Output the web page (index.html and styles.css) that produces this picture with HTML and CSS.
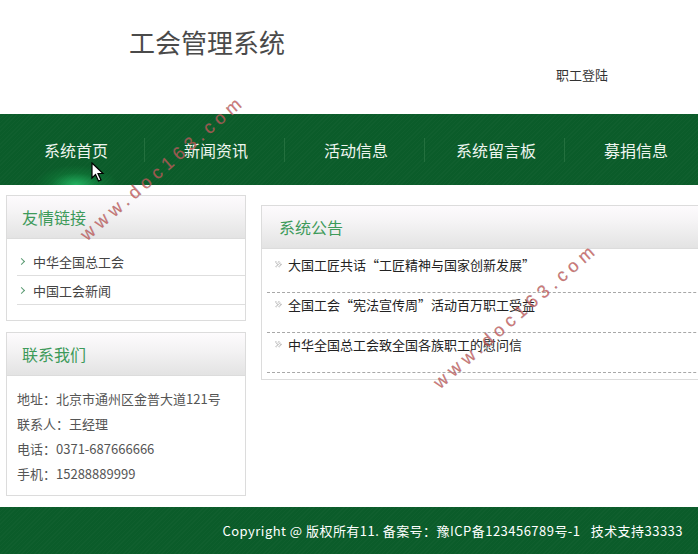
FILE: index.html
```html
<!DOCTYPE html>
<html lang="zh-CN">
<head>
<meta charset="utf-8">
<title>工会管理系统</title>
<link rel="stylesheet" href="styles.css">
</head>
<body>
<div class="page">
  <header class="top">
    <h1 class="logo">工会管理系统</h1>
    <a class="login" href="#">职工登陆</a>
  </header>
  <nav class="nav">
    <a class="nav-item active" href="#">系统首页</a>
    <a class="nav-item" href="#">新闻资讯</a>
    <a class="nav-item" href="#">活动信息</a>
    <a class="nav-item" href="#">系统留言板</a>
    <a class="nav-item last" href="#">募捐信息</a>
  </nav>
  <main class="main">
    <aside class="side">
      <section class="box links">
        <h2 class="box-title">友情链接</h2>
        <ul class="link-list">
          <li><span class="chev"></span>中华全国总工会</li>
          <li><span class="chev"></span>中国工会新闻</li>
        </ul>
      </section>
      <section class="box contact">
        <h2 class="box-title">联系我们</h2>
        <div class="contact-body">
          <p>地址：北京市通州区金普大道121号</p>
          <p>联系人：王经理</p>
          <p>电话：0371-687666666</p>
          <p>手机：15288889999</p>
        </div>
      </section>
    </aside>
    <section class="box notice">
      <h2 class="box-title">系统公告</h2>
      <ul class="notice-list">
        <li><svg class="dbl" width="7" height="7" viewBox="0 0 7 7"><path d="M0.5 0.5 L3 3.5 L0.5 6.5 M3.5 0.5 L6 3.5 L3.5 6.5" fill="none" stroke="#b0b0b0" stroke-width="1.3" stroke-dasharray="1 0.6"/></svg>大国工匠共话“工匠精神与国家创新发展”</li>
        <li><svg class="dbl" width="7" height="7" viewBox="0 0 7 7"><path d="M0.5 0.5 L3 3.5 L0.5 6.5 M3.5 0.5 L6 3.5 L3.5 6.5" fill="none" stroke="#b0b0b0" stroke-width="1.3" stroke-dasharray="1 0.6"/></svg>全国工会“宪法宣传周”活动百万职工受益</li>
        <li><svg class="dbl" width="7" height="7" viewBox="0 0 7 7"><path d="M0.5 0.5 L3 3.5 L0.5 6.5 M3.5 0.5 L6 3.5 L3.5 6.5" fill="none" stroke="#b0b0b0" stroke-width="1.3" stroke-dasharray="1 0.6"/></svg>中华全国总工会致全国各族职工的慰问信</li>
      </ul>
    </section>
  </main>
  <footer class="footer">Copyright @ 版权所有11. 备案号：豫ICP备123456789号-1&nbsp;&nbsp;&nbsp;技术支持33333</footer>
</div>
<span class="wm wm1">www.doc163.com</span>
<span class="wm wm2">www.doc163.com</span>
<svg class="cursor" width="14" height="20" viewBox="0 0 14 20"><path d="M1 1 L1 16 L4.5 12.5 L7.5 19 L10 18 L7 11.5 L12 11.5 Z" fill="#fff" stroke="#000" stroke-width="1.2" stroke-linejoin="miter"/></svg>
</body>
</html>
```

FILE: styles.css
```css
html, body {
  margin: 0;
  padding: 0;
  background: #fff;
  overflow: hidden;
}
body {
  font-family: "Noto Sans CJK SC", "Microsoft YaHei", sans-serif;
  color: #333;
  width: 698px;
  height: 554px;
  position: relative;
}
.page {
  width: 698px;
}
.top {
  height: 114px;
  display: flex;
  justify-content: space-between;
  align-items: flex-start;
}
.logo {
  margin: 25px 0 0 129px;
  font-size: 26px;
  font-weight: normal;
  color: #4a4a4a;
  line-height: 34px;
}
.login {
  margin: 66px 90px 0 0;
  font-size: 13px;
  color: #333;
  text-decoration: none;
  line-height: 18px;
}
.nav {
  height: 71px;
  background-color: #0b5c2a;
  background-image:
    radial-gradient(ellipse 42px 20px at 76px 71px, rgba(40, 200, 110, 0.8), rgba(20, 150, 70, 0.3) 60%, rgba(11, 92, 42, 0) 100%),
    repeating-linear-gradient(135deg, rgba(255,255,255,0.018) 0 1px, rgba(0,0,0,0) 1px 3px);
  display: flex;
  align-items: center;
  padding-left: 5px;
}
.nav-item {
  flex: none;
  width: 139px;
  border-right: 1px solid #23703e;
  height: 24px;
  line-height: 24px;
  text-align: center;
  text-indent: 3px;
  color: #eef5ef;
  font-size: 16px;
  text-decoration: none;
}
.nav-item.last {
  border-right: none;
}
.main {
  display: flex;
  align-items: flex-start;
  height: 322px;
}
.side {
  margin: 10px 0 0 6px;
  width: 240px;
  flex: none;
  display: flex;
  flex-direction: column;
  gap: 11px;
}
.box {
  border: 1px solid #dcdcdc;
  background: #fff;
}
.box-title {
  margin: 0;
  height: 42px;
  line-height: 42px;
  font-size: 16px;
  font-weight: normal;
  color: #3d9a5a;
  padding-left: 15px;
  background: linear-gradient(#fdfbfd 0%, #f4f3f4 40%, #e3e3e3 100%);
  border-bottom: 1px solid #dcdcdc;
}
.link-list {
  list-style: none;
  margin: 0;
  padding: 8px 0 15px 10px;
  font-size: 13px;
  color: #444;
}
.link-list li {
  height: 28px;
  line-height: 29px;
  border-bottom: 1px solid #dedede;
  display: flex;
  align-items: center;
  padding-left: 2px;
}
.chev {
  width: 4px;
  height: 4px;
  border-top: 1.5px solid #5a9a72;
  border-right: 1.5px solid #5a9a72;
  transform: rotate(45deg);
  margin: 0 9px 0 0;
}
.contact-body {
  padding: 10px 10px 9px 10px;
  font-size: 13px;
  color: #555;
}
.contact-body p {
  margin: 0;
  line-height: 25px;
}
.notice {
  margin: 20px 0 0 15px;
  width: 700px;
  flex: none;
}
.notice .box-title {
  padding-left: 17px;
}
.notice-list {
  list-style: none;
  margin: 0;
  padding: 4px 0 6px 5px;
  font-size: 13px;
  color: #222;
}
.notice-list li {
  height: 39px;
  line-height: 24px;
  border-bottom: 1px dashed #a8a8a8;
  padding-left: 8px;
  display: flex;
  align-items: flex-start;
}
.dbl {
  flex: none;
  margin: 8px 6px 0 0;
}
.footer {
  height: 47px;
  line-height: 47px;
  background-color: #0b5c2a;
  background-image: repeating-linear-gradient(135deg, rgba(255,255,255,0.018) 0 1px, rgba(0,0,0,0) 1px 3px);
  color: #fff;
  font-size: 13px;
  letter-spacing: 0.47px;
  text-align: right;
  padding-right: 15px;
}
.wm {
  position: absolute;
  font-family: "Liberation Sans", Arial, sans-serif;
  font-size: 18px;
  letter-spacing: 5px;
  color: rgba(205, 80, 80, 0.8);
  white-space: nowrap;
  transform: translate(-50%, -50%) rotate(-41deg);
  pointer-events: none;
  -webkit-text-stroke: 0.4px rgba(120, 120, 120, 0.5);
}
.wm1 {
  left: 163px;
  top: 168px;
}
.wm2 {
  left: 516px;
  top: 316px;
}
.cursor {
  position: absolute;
  left: 91px;
  top: 162px;
}
```
